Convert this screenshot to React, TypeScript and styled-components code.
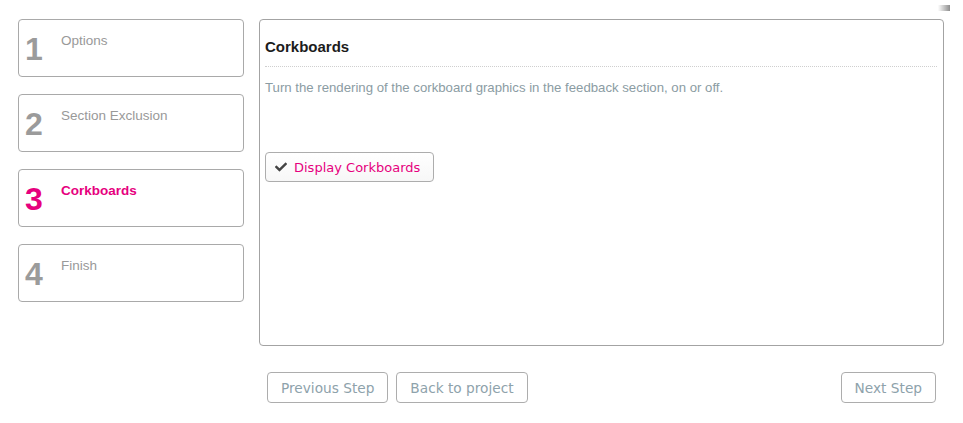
import React from "react";
import styled, { createGlobalStyle } from "styled-components";
import { FaCheck } from "react-icons/fa";

const GlobalStyle = createGlobalStyle`
  html, body {
    margin: 0;
    padding: 0;
    background: #ffffff;
    font-family: "Liberation Sans", Arial, sans-serif;
  }
`;

const Page = styled.div`
  position: relative;
  display: flex;
  align-items: flex-start;
  gap: 15px;
  padding: 19px 19px 0 18px;
`;

const Sidebar = styled.div`
  width: 226px;
  flex: none;
  display: flex;
  flex-direction: column;
  gap: 17px;
`;

const StepCard = styled.div`
  box-sizing: border-box;
  height: 58px;
  border: 1px solid #a9a9a9;
  border-radius: 4px;
  display: flex;
  align-items: flex-start;
  padding: 13px 6px 0 6px;
  background: #fff;
`;

const StepNumber = styled.div<{ $active?: boolean }>`
  width: 36px;
  flex: none;
  font-family: "Liberation Sans", Arial, sans-serif;
  font-weight: bold;
  font-size: 32px;
  line-height: 32px;
  color: ${(p) => (p.$active ? "#e6007e" : "#9b9b9b")};
`;

const StepTitle = styled.div<{ $active?: boolean }>`
  font-size: 13.5px;
  line-height: 15px;
  font-weight: ${(p) => (p.$active ? "bold" : "normal")};
  color: ${(p) => (p.$active ? "#e6007e" : "#999999")};
`;

const Main = styled.div`
  flex: 1;
  display: flex;
  flex-direction: column;
`;

const Panel = styled.div`
  box-sizing: border-box;
  height: 327px;
  border: 1px solid #a3a3a3;
  border-radius: 4px;
  padding: 18px 6px 0 5px;
  background: #fff;
`;

const Heading = styled.h2`
  margin: 0;
  font-size: 15px;
  line-height: 17px;
  font-weight: bold;
  color: #1c1c1c;
  padding-bottom: 11px;
  border-bottom: 1px dotted #cfcfcf;
`;

const Description = styled.p`
  margin: 13px 0 0 0;
  font-size: 13.2px;
  line-height: 15px;
  color: #8b9ca3;
`;

const ToggleButton = styled.button`
  margin-top: 57px;
  box-sizing: border-box;
  height: 30px;
  display: inline-flex;
  align-items: center;
  gap: 7px;
  padding: 0 13px 0 9px;
  border: 1px solid #adadad;
  border-radius: 4px;
  background: linear-gradient(#ffffff, #f7f7f7);
  font-family: "DejaVu Sans", Verdana, sans-serif;
  font-size: 13px;
  color: #e6007e;
  cursor: pointer;

  svg {
    width: 12px;
    height: 12px;
    color: #444;
  }
`;

const NavRow = styled.div`
  display: flex;
  gap: 8px;
  padding: 0 8px;
  margin-top: 26px;
`;

const NavButton = styled.button<{ $push?: boolean }>`
  box-sizing: border-box;
  height: 31px;
  padding: 0 13px;
  margin-left: ${(p) => (p.$push ? "auto" : "0")};
  border: 1px solid #adadad;
  border-radius: 4px;
  background: #fff;
  font-family: "DejaVu Sans", Verdana, sans-serif;
  font-size: 13.7px;
  color: #8ea2ab;
  cursor: pointer;
`;

const CornerMark = styled.div`
  position: absolute;
  top: 5px;
  left: 938px;
  width: 12px;
  height: 6px;
  background: linear-gradient(to right, rgba(255, 255, 255, 0), #7a7a7a),
    #fff;
  opacity: 0.85;
`;

const steps = [
  { n: 1, title: "Options" },
  { n: 2, title: "Section Exclusion" },
  { n: 3, title: "Corkboards", active: true },
  { n: 4, title: "Finish" },
];

export default function App() {
  return (
    <>
      <GlobalStyle />
      <Page>
        <CornerMark />
        <Sidebar>
          {steps.map((s) => (
            <StepCard key={s.n}>
              <StepNumber $active={s.active}>{s.n}</StepNumber>
              <StepTitle $active={s.active}>{s.title}</StepTitle>
            </StepCard>
          ))}
        </Sidebar>
        <Main>
          <Panel>
            <Heading>Corkboards</Heading>
            <Description>
              Turn the rendering of the corkboard graphics in the feedback
              section, on or off.
            </Description>
            <ToggleButton>
              <FaCheck />
              Display Corkboards
            </ToggleButton>
          </Panel>
          <NavRow>
            <NavButton>Previous Step</NavButton>
            <NavButton>Back to project</NavButton>
            <NavButton $push>Next Step</NavButton>
          </NavRow>
        </Main>
      </Page>
    </>
  );
}
